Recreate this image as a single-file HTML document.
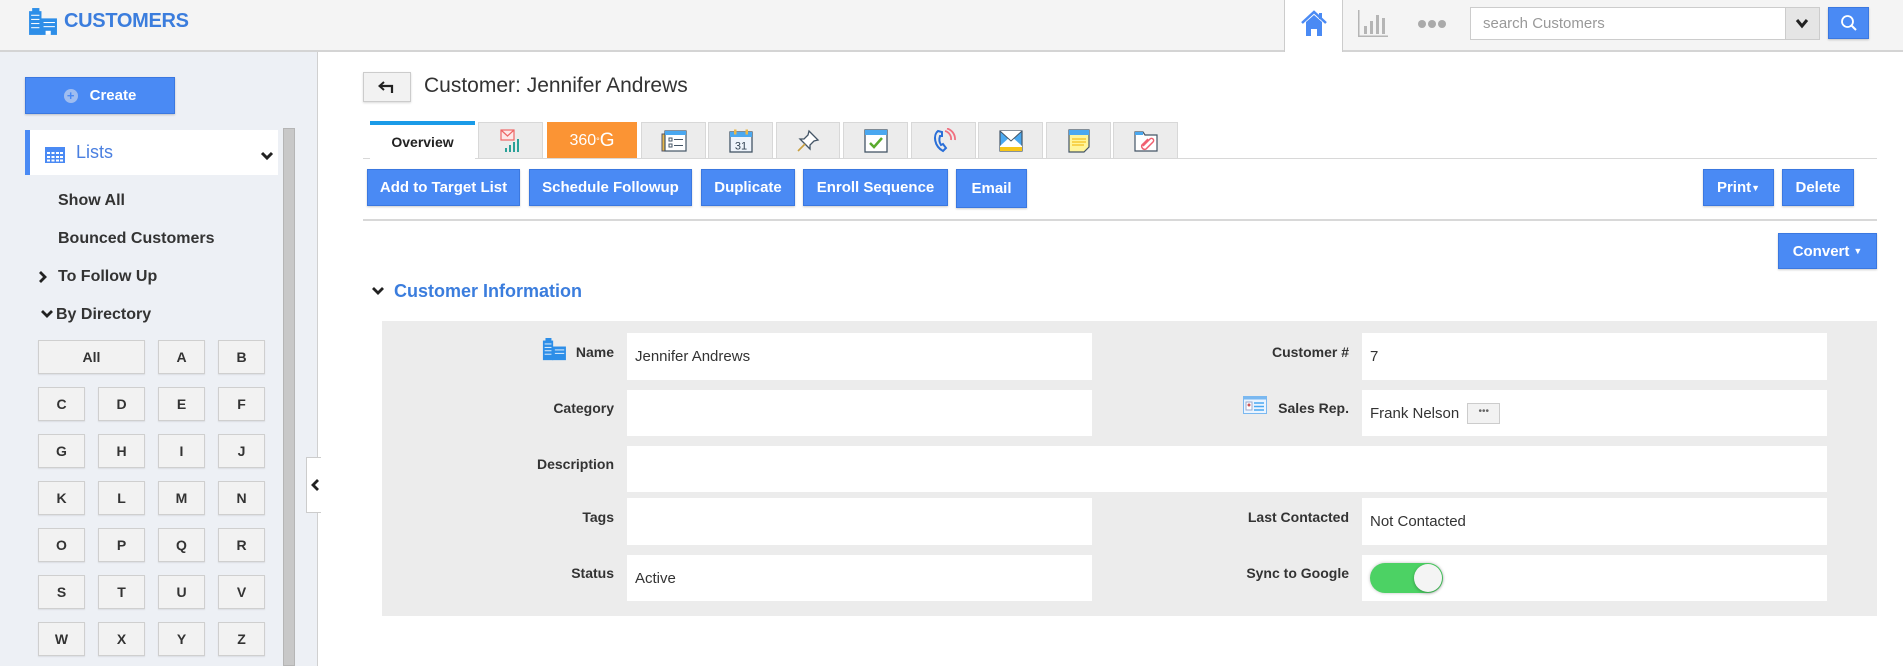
<!DOCTYPE html>
<html><head><meta charset="utf-8"><style>
*{box-sizing:border-box;margin:0;padding:0}
body{width:1903px;height:666px;overflow:hidden;background:#fff;font-family:"Liberation Sans",Arial,sans-serif;position:relative;color:#333}
.a{position:absolute}
.hdr{left:0;top:0;width:1903px;height:52px;background:#f4f4f4;border-bottom:2px solid #d4d4d4}
.side{left:0;top:52px;width:318px;height:614px;background:#edf0f5;border-right:1px solid #d0d0d0}
.btn{position:absolute;background:#4a8af4;border:1px solid #3b78e0;color:#fff;font-weight:bold;font-size:15px;display:flex;align-items:center;justify-content:center;box-shadow:0 1px 2px rgba(0,0,0,.2)}
.sitem{position:absolute;left:58px;font-size:16px;font-weight:bold;color:#333}
.lb{position:absolute;width:47px;height:34px;background:#f2f2f2;border:1px solid #cfcfcf;font-size:14px;font-weight:bold;color:#333;display:flex;align-items:center;justify-content:center;box-shadow:0 1px 1px rgba(0,0,0,.08)}
.tab{position:absolute;top:122px;height:36px;background:#ececec;border:1px solid #d8d8d8;border-bottom:none;display:flex;align-items:center;justify-content:center}
.lab{position:absolute;font-size:14px;font-weight:bold;color:#333;text-align:right}
.inp{position:absolute;background:#fff;font-size:15px;color:#333;padding-left:8px;display:flex;align-items:center}
</style></head><body>
<div class="a hdr"></div>
<svg class="a" style="left:27px;top:8px" width="31" height="28" viewBox="0 0 30 27"><rect x="2" y="3" width="12" height="23" fill="#2d8ee8"/><rect x="5" y="0" width="7" height="4" fill="#2d8ee8"/><rect x="13" y="10" width="16" height="16" fill="#2d8ee8"/><g stroke="#fff" stroke-width="1"><line x1="4" y1="7" x2="12" y2="7"/><line x1="4" y1="11" x2="12" y2="11"/><line x1="4" y1="15" x2="12" y2="15"/><line x1="4" y1="19" x2="12" y2="19"/><line x1="16" y1="14" x2="27" y2="14"/><line x1="16" y1="18" x2="27" y2="18"/></g><rect x="18" y="22" width="5" height="4" fill="#fff"/></svg>
<div class="a" style="left:64px;top:10px;font-size:20px;font-weight:bold;color:#3b7ddd;letter-spacing:-0.3px">CUSTOMERS</div>
<div class="a" style="left:1284px;top:0;width:59px;height:52px;background:#fff;border-left:1px solid #ccc;border-right:1px solid #ccc"></div>
<svg class="a" style="left:1300px;top:9px" width="28" height="28" viewBox="0 0 28 28"><path d="M2 14 L14 3 L26 14" fill="none" stroke="#4a8af4" stroke-width="2.5"/><rect x="19" y="4" width="3" height="6" fill="#4a8af4"/><path d="M6 13 L14 6 L22 13 V27 H17 V20 H11 V27 H6Z" fill="#4a8af4"/></svg>
<svg class="a" style="left:1358px;top:10px" width="30" height="27" viewBox="0 0 30 27"><g fill="#b5b5b5"><rect x="0" y="0" width="1.5" height="27"/><rect x="0" y="25.5" width="30" height="1.5"/><rect x="6" y="16" width="3" height="8"/><rect x="12" y="11" width="3" height="13"/><rect x="18" y="5" width="3" height="19"/><rect x="24" y="8" width="3" height="16"/></g></svg>
<div class="a" style="left:1418px;top:20px;width:30px;height:10px"><span class="a" style="left:0;top:0;width:8px;height:8px;border-radius:50%;background:#aaa"></span><span class="a" style="left:10px;top:0;width:8px;height:8px;border-radius:50%;background:#aaa"></span><span class="a" style="left:20px;top:0;width:8px;height:8px;border-radius:50%;background:#aaa"></span></div>
<div class="a" style="left:1470px;top:7px;width:350px;height:33px;background:#fff;border:1px solid #ccc"></div>
<div class="a" style="left:1483px;top:15px;font-size:15px;color:#999">search Customers</div>
<div class="a" style="left:1785px;top:8px;width:34px;height:31px;background:#e5e5e5;border-left:1px solid #ccc"></div>
<svg class="a" style="left:1795px;top:18px" width="14" height="11" viewBox="0 0 14 11"><path d="M2 2 L7 8 L12 2" fill="none" stroke="#222" stroke-width="3"/></svg>
<div class="btn" style="left:1828px;top:7px;width:41px;height:32px"><svg width="18" height="18" viewBox="0 0 18 18"><circle cx="7.5" cy="7.5" r="5.5" fill="none" stroke="#fff" stroke-width="1.8"/><line x1="11.5" y1="11.5" x2="16" y2="16" stroke="#fff" stroke-width="2"/></svg></div>

<div class="a side"></div>
<div class="btn" style="left:25px;top:77px;width:150px;height:37px"><span style="display:inline-block;width:14px;height:14px;border-radius:50%;background:#9fbdf0;color:#4a8af4;font-size:13px;line-height:14px;text-align:center;margin-right:12px">+</span>Create</div>
<div class="a" style="left:25px;top:130px;width:253px;height:45px;background:#fff;border-left:5px solid #4a8af4"></div>
<svg class="a" style="left:45px;top:147px" width="20" height="16" viewBox="0 0 20 16"><rect width="20" height="16" fill="#4a8af4"/><g fill="#fff"><rect x="2" y="5" width="3" height="2"/><rect x="6.5" y="5" width="3" height="2"/><rect x="11" y="5" width="3" height="2"/><rect x="15" y="5" width="3" height="2"/><rect x="2" y="9" width="3" height="2"/><rect x="6.5" y="9" width="3" height="2"/><rect x="11" y="9" width="3" height="2"/><rect x="15" y="9" width="3" height="2"/><rect x="2" y="12.5" width="3" height="2"/><rect x="6.5" y="12.5" width="3" height="2"/><rect x="11" y="12.5" width="3" height="2"/><rect x="15" y="12.5" width="3" height="2"/></g></svg>
<div class="a" style="left:76px;top:142px;font-size:18px;color:#4a7fe0">Lists</div>
<svg class="a" style="left:260px;top:151px" width="14" height="10" viewBox="0 0 14 10"><path d="M2 2 L7 7 L12 2" fill="none" stroke="#222" stroke-width="3"/></svg>
<div class="a" style="left:283px;top:128px;width:12px;height:538px;background:#c8c8c8;border:1px solid #b5b5b5"></div>
<div class="sitem" style="top:192px">Show All</div>
<div class="sitem" style="top:230px">Bounced Customers</div>
<svg class="a" style="left:38px;top:270px" width="10" height="14" viewBox="0 0 10 14"><path d="M2 2 L7 7 L2 12" fill="none" stroke="#222" stroke-width="2.8"/></svg>
<div class="sitem" style="top:268px">To Follow Up</div>
<svg class="a" style="left:40px;top:309px" width="14" height="10" viewBox="0 0 14 10"><path d="M2 2 L7 7 L12 2" fill="none" stroke="#222" stroke-width="2.8"/></svg>
<div class="sitem" style="top:306px;left:56px">By Directory</div>
<div class="lb" style="left:38px;top:340px;width:107px">All</div>
<div class="lb" style="left:158px;top:340px">A</div><div class="lb" style="left:218px;top:340px">B</div>
<div class="lb" style="left:38px;top:387px">C</div><div class="lb" style="left:98px;top:387px">D</div><div class="lb" style="left:158px;top:387px">E</div><div class="lb" style="left:218px;top:387px">F</div>
<div class="lb" style="left:38px;top:434px">G</div><div class="lb" style="left:98px;top:434px">H</div><div class="lb" style="left:158px;top:434px">I</div><div class="lb" style="left:218px;top:434px">J</div>
<div class="lb" style="left:38px;top:481px">K</div><div class="lb" style="left:98px;top:481px">L</div><div class="lb" style="left:158px;top:481px">M</div><div class="lb" style="left:218px;top:481px">N</div>
<div class="lb" style="left:38px;top:528px">O</div><div class="lb" style="left:98px;top:528px">P</div><div class="lb" style="left:158px;top:528px">Q</div><div class="lb" style="left:218px;top:528px">R</div>
<div class="lb" style="left:38px;top:575px">S</div><div class="lb" style="left:98px;top:575px">T</div><div class="lb" style="left:158px;top:575px">U</div><div class="lb" style="left:218px;top:575px">V</div>
<div class="lb" style="left:38px;top:622px">W</div><div class="lb" style="left:98px;top:622px">X</div><div class="lb" style="left:158px;top:622px">Y</div><div class="lb" style="left:218px;top:622px">Z</div>
<div class="a" style="left:306px;top:457px;width:15px;height:56px;background:#fff;border:1px solid #ccc;border-right:none"></div>
<svg class="a" style="left:310px;top:478px" width="10" height="14" viewBox="0 0 10 14"><path d="M8 2 L3 7 L8 12" fill="none" stroke="#222" stroke-width="2.8"/></svg>

<div class="a" style="left:363px;top:72px;width:48px;height:30px;background:#f2f2f2;border:1px solid #ccc;box-shadow:0 1px 2px rgba(0,0,0,.15)"></div>
<svg class="a" style="left:378px;top:81px" width="18" height="12" viewBox="0 0 18 12"><path d="M6 1 L1.5 5 L6 9" fill="none" stroke="#222" stroke-width="2"/><path d="M2 5 H14 V12" fill="none" stroke="#222" stroke-width="2.2"/></svg>
<div class="a" style="left:424px;top:74px;font-size:21px;color:#333">Customer: Jennifer Andrews</div>

<div class="a" style="left:363px;top:158px;width:1514px;height:1px;background:#d8d8d8"></div>
<div class="tab" style="left:370px;width:105px;background:#fff;border:none;border-top:4px solid #1a9be8;height:38px;top:121px;font-size:14px;font-weight:bold;color:#222">Overview</div>
<div class="tab" style="left:478px;width:65px"><svg width="22" height="24" viewBox="0 0 22 24"><rect x="1" y="1" width="13" height="10" fill="#fde8e8" stroke="#e66" stroke-width="1.2"/><path d="M1 1 L7.5 7 L14 1" fill="none" stroke="#e66" stroke-width="1.2"/><g fill="#2aa198"><rect x="5" y="19" width="2" height="4"/><rect x="9" y="16" width="2" height="7"/><rect x="13" y="13" width="2" height="10"/><rect x="17" y="10" width="2" height="13"/></g></svg></div>
<div class="tab" style="left:547px;width:90px;background:#fb9434;border-color:#fb9434;color:#fff;font-size:16px">360<sup style="font-size:9px">°</sup><span style="font-size:19px">G</span></div>
<div class="tab" style="left:641px;width:65px"><svg width="26" height="22" viewBox="0 0 26 22"><rect x="1" y="4" width="5" height="17" fill="#e8b84a" stroke="#556" stroke-width="1"/><rect x="4" y="1" width="21" height="20" fill="#fff" stroke="#456" stroke-width="1.2"/><rect x="4" y="1" width="21" height="4" fill="#4aa8f0"/><g stroke="#456" fill="none"><rect x="8" y="8" width="3" height="3"/><rect x="8" y="14" width="3" height="3"/><line x1="13" y1="9.5" x2="22" y2="9.5"/><line x1="13" y1="15.5" x2="22" y2="15.5"/></g></svg></div>
<div class="tab" style="left:708px;width:65px"><svg width="24" height="24" viewBox="0 0 24 24"><rect x="1" y="3" width="22" height="20" fill="#eef4fb" stroke="#456" stroke-width="1.3"/><rect x="1" y="3" width="22" height="5" fill="#4aa8f0"/><rect x="5" y="0.5" width="2.5" height="5" fill="#e8b84a"/><rect x="16.5" y="0.5" width="2.5" height="5" fill="#e8b84a"/><text x="12" y="20.5" font-size="11" text-anchor="middle" fill="#345" font-family="Liberation Sans">31</text></svg></div>
<div class="tab" style="left:776px;width:64px"><svg width="24" height="24" viewBox="0 0 24 24"><path d="M13 2 L22 11 L18 12 L14 16 L14 20 L4 10 L8 10 L12 6Z" fill="#fff" stroke="#456" stroke-width="1.3"/><line x1="9" y1="15" x2="2" y2="22" stroke="#c9a040" stroke-width="1.6"/></svg></div>
<div class="tab" style="left:843px;width:65px"><svg width="24" height="24" viewBox="0 0 24 24"><rect x="1" y="1" width="22" height="22" fill="#fff" stroke="#456" stroke-width="1.3"/><rect x="1" y="1" width="22" height="5" fill="#4aa8f0"/><path d="M6 14 L10 18 L18 9" fill="none" stroke="#5aab2e" stroke-width="2.5"/></svg></div>
<div class="tab" style="left:911px;width:65px"><svg width="24" height="26" viewBox="0 0 24 26"><path d="M6 3 C1 7 2 18 11 23 L14 20 L11 16 L9 17 C7 14 7 11 8 8 L10 8 L10 4Z" fill="none" stroke="#2a6fd8" stroke-width="2"/><path d="M13 3 A8 8 0 0 1 19 12" fill="none" stroke="#f07080" stroke-width="1.8"/><path d="M15 0.5 A11 11 0 0 1 23 12" fill="none" stroke="#f07080" stroke-width="1.8"/></svg></div>
<div class="tab" style="left:978px;width:65px"><svg width="24" height="22" viewBox="0 0 24 22"><rect x="1" y="1" width="22" height="20" fill="#4aa8f0" stroke="#456" stroke-width="1.2"/><path d="M1 16 L12 6 L23 16 V21 H1Z" fill="#fff"/><rect x="1" y="17" width="22" height="4" fill="#f6c518"/><path d="M1 1 L12 11 L23 1" fill="#fff" stroke="#456" stroke-width="1"/></svg></div>
<div class="tab" style="left:1046px;width:65px"><svg width="22" height="24" viewBox="0 0 22 24"><path d="M1 1 H21 V18 L16 23 H1Z" fill="#fff59a" stroke="#456" stroke-width="1.2"/><rect x="1" y="1" width="20" height="5" fill="#4aa8f0"/><g stroke="#f0b400"><line x1="4" y1="10" x2="18" y2="10"/><line x1="4" y1="13" x2="18" y2="13"/><line x1="4" y1="16" x2="16" y2="16"/></g></svg></div>
<div class="tab" style="left:1113px;width:65px"><svg width="24" height="22" viewBox="0 0 24 22"><path d="M1 2 H9 L11 5 H23 V21 H1Z" fill="#fff" stroke="#456" stroke-width="1.2"/><rect x="1" y="2" width="8" height="3" fill="#4aa8f0"/><path d="M9 16 L16 9 A2 2 0 0 1 19 12 L12 19 A3 3 0 0 1 8 15 L14 9" fill="none" stroke="#f06070" stroke-width="1.5"/></svg></div>

<div class="btn" style="left:367px;top:169px;width:153px;height:37px">Add to Target List</div>
<div class="btn" style="left:529px;top:169px;width:163px;height:37px">Schedule Followup</div>
<div class="btn" style="left:701px;top:169px;width:94px;height:37px">Duplicate</div>
<div class="btn" style="left:803px;top:169px;width:145px;height:37px">Enroll Sequence</div>
<div class="btn" style="left:956px;top:169px;width:71px;height:39px">Email</div>
<div class="btn" style="left:1703px;top:169px;width:71px;height:37px">Print<span style="font-size:9px">▼</span></div>
<div class="btn" style="left:1782px;top:169px;width:72px;height:37px">Delete</div>
<div class="a" style="left:363px;top:219px;width:1514px;height:2px;background:#d8d8d8"></div>
<div class="btn" style="left:1778px;top:233px;width:99px;height:36px">Convert <span style="font-size:9px;margin-left:4px">▼</span></div>

<svg class="a" style="left:371px;top:286px" width="14" height="10" viewBox="0 0 14 10"><path d="M2 2 L7 7 L12 2" fill="none" stroke="#222" stroke-width="2.8"/></svg>
<div class="a" style="left:394px;top:281px;font-size:18px;font-weight:bold;color:#3b7ddd">Customer Information</div>

<div class="a" style="left:382px;top:321px;width:1495px;height:295px;background:#ececec"></div>
<svg class="a" style="left:541px;top:338px" width="26" height="23" viewBox="0 0 30 27"><rect x="2" y="3" width="12" height="23" fill="#2d8ee8"/><rect x="5" y="0" width="7" height="4" fill="#2d8ee8"/><rect x="13" y="10" width="16" height="16" fill="#2d8ee8"/><g stroke="#fff" stroke-width="1"><line x1="4" y1="7" x2="12" y2="7"/><line x1="4" y1="11" x2="12" y2="11"/><line x1="4" y1="15" x2="12" y2="15"/><line x1="4" y1="19" x2="12" y2="19"/><line x1="16" y1="14" x2="27" y2="14"/><line x1="16" y1="18" x2="27" y2="18"/></g></svg>
<div class="lab" style="right:1289px;top:344px">Name</div>
<div class="lab" style="right:1289px;top:400px">Category</div>
<div class="lab" style="right:1289px;top:456px">Description</div>
<div class="lab" style="right:1289px;top:509px">Tags</div>
<div class="lab" style="right:1289px;top:565px">Status</div>
<div class="inp" style="left:627px;top:333px;width:465px;height:47px">Jennifer Andrews</div>
<div class="inp" style="left:627px;top:390px;width:465px;height:46px"></div>
<div class="inp" style="left:627px;top:446px;width:1200px;height:46px"></div>
<div class="inp" style="left:627px;top:498px;width:465px;height:47px"></div>
<div class="inp" style="left:627px;top:555px;width:465px;height:46px">Active</div>
<div class="lab" style="right:554px;top:344px">Customer #</div>
<svg class="a" style="left:1243px;top:396px" width="24" height="18" viewBox="0 0 24 18"><rect x="0.5" y="0.5" width="23" height="17" fill="#eaf4ff" stroke="#7ab8f0"/><rect x="0.5" y="0.5" width="23" height="3" fill="#7ab8f0"/><rect x="3" y="6" width="6" height="8" fill="#fff" stroke="#9ac"/><circle cx="6" cy="9" r="1.5" fill="#c55"/><g stroke="#4aa8f0" stroke-width="1.5"><line x1="11" y1="7" x2="21" y2="7"/><line x1="11" y1="10.5" x2="21" y2="10.5"/><line x1="11" y1="14" x2="21" y2="14"/></g></svg>
<div class="lab" style="right:554px;top:400px">Sales Rep.</div>
<div class="lab" style="right:554px;top:509px">Last Contacted</div>
<div class="lab" style="right:554px;top:565px">Sync to Google</div>
<div class="inp" style="left:1362px;top:333px;width:465px;height:47px">7</div>
<div class="inp" style="left:1362px;top:390px;width:465px;height:46px">Frank Nelson<span style="display:inline-block;margin-left:8px;width:33px;height:21px;background:#f2f2f2;border:1px solid #ccc;font-size:10px;text-align:center;line-height:16px;color:#666">•••</span></div>
<div class="inp" style="left:1362px;top:498px;width:465px;height:47px">Not Contacted</div>
<div class="inp" style="left:1362px;top:555px;width:465px;height:46px"><div style="position:relative;width:73px;height:30px;border-radius:15px;background:#4cd264;box-shadow:0 0 3px rgba(0,0,0,.25)"><div style="position:absolute;right:1px;top:1px;width:28px;height:28px;border-radius:50%;background:#f4f4f4;box-shadow:0 1px 3px rgba(0,0,0,.3)"></div></div></div>
</body></html>
